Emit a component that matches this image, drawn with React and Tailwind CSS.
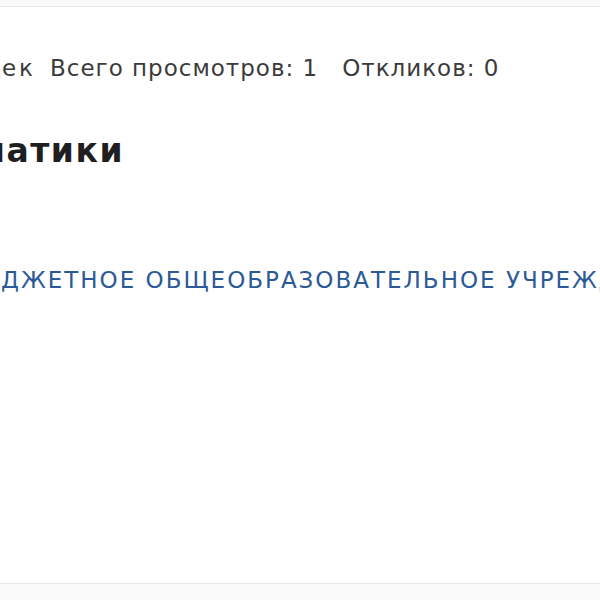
import React from 'react';

const FONT = { fontFamily: '"DejaVu Sans", "Noto Sans", sans-serif' };

export default function App() {
  return (
    <div className="min-h-[600px] w-[600px] bg-[#f9f9f9] pt-[6px] overflow-hidden" style={FONT}>
      <div className="h-[578px] border-y border-[#e8e8e8] bg-white overflow-hidden">
        <div className="-ml-[300px]">
          {/* meta row */}
          <div className="mt-[47px] flex items-center whitespace-nowrap text-[23px] leading-[28px] tracking-[1px] text-[#3b3b3b]">
            <span className="w-[336px] shrink-0 text-right">
              Опубликовано: 12 д<span className="tracking-[3px]">ек</span>
            </span>
            <span className="ml-[14px]">Всего просмотров: 1</span>
            <span className="ml-[24px]">Откликов: 0</span>
          </div>

          <h1 className="mt-[48px] w-[421px] whitespace-nowrap text-right text-[33px] font-bold leading-[42px] tracking-[1.5px] text-[#1f1f1f]">
            Учитель математики
          </h1>

          <a href="#" className="mt-[94px] flex whitespace-nowrap text-[23px] leading-[28px] tracking-[2px] text-[#2b5a97]">
            <span className="w-[301px] shrink-0 text-right">МУНИЦИПАЛЬНОЕ БЮ</span>
            <span>ДЖЕТНОЕ ОБЩЕОБРАЗОВАТЕЛЬНОЕ УЧРЕЖДЕНИЕ</span>
          </a>
        </div>
      </div>
    </div>
  );
}
